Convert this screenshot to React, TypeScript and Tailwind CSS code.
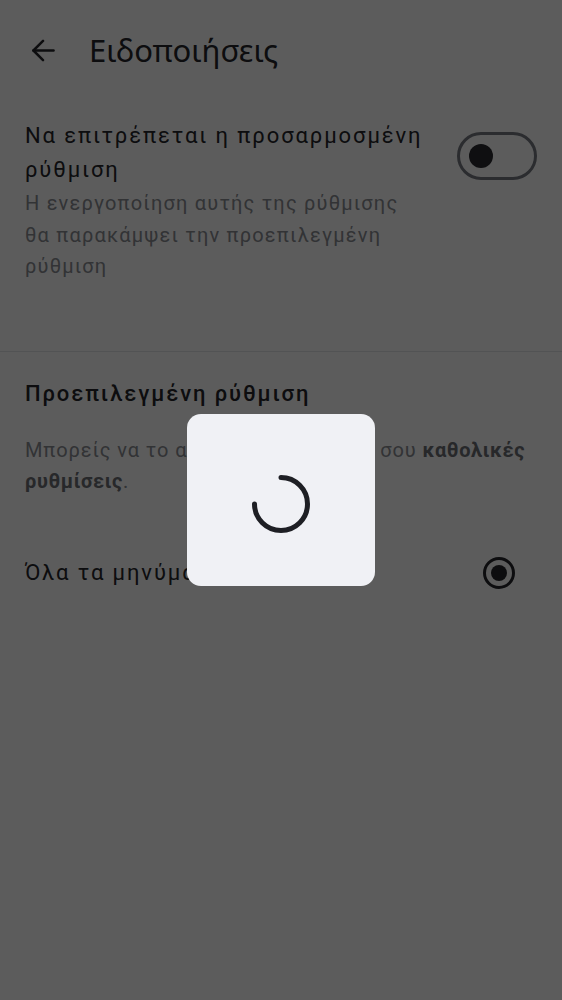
import { useState } from 'react';

function Spinner() {
  // 270° arc from 12 o'clock clockwise to 9 o'clock
  return (
    <svg width="64" height="64" viewBox="0 0 64 64" className="block">
      <path
        d="M32 5.5 A26.5 26.5 0 1 1 5.5 32"
        fill="none"
        stroke="#1e1f24"
        strokeWidth="5"
        strokeLinecap="round"
      />
    </svg>
  );
}

export default function App() {
  const [custom, setCustom] = useState(false);
  const [choice, setChoice] = useState('all');

  return (
    <div className="min-h-screen bg-white" style={{ fontFamily: 'Roboto, "Noto Sans", sans-serif' }}>
      {/* Header */}
      <div className="flex items-center h-[100px] pl-[32px] gap-[34px]">
        <button className="w-[23px] h-6 flex items-center justify-center">
          <svg width="23" height="23" viewBox="0 0 24 24" fill="none" stroke="#25262a" strokeWidth="2.6" strokeLinecap="round" strokeLinejoin="round">
            <path d="M22.5 12H1.5" />
            <path d="M11.5 2 L1.5 12 L11.5 22" />
          </svg>
        </button>
        <h1 className="text-[31px] text-[#25262a]" style={{ fontFamily: '"Noto Sans", sans-serif' }}>
          Ειδοποιήσεις
        </h1>
      </div>

      {/* Custom setting */}
      <div className="flex items-start justify-between px-[25px] pt-[19px] pb-[68px] border-b border-[#e4e5e9]">
        <div className="max-w-[402px]">
          <div className="text-[22px] leading-[34px] tracking-[1.9px] text-[#25262a]">
            Να επιτρέπεται η προσαρμοσμένη ρύθμιση
          </div>
          <div className="text-[20px] leading-[31.5px] tracking-[1.2px] text-[#8a8d93] mt-[1px]">
            Η ενεργοποίηση αυτής της ρύθμισης θα παρακάμψει την προεπιλεγμένη ρύθμιση
          </div>
        </div>
        <button
          onClick={() => setCustom(!custom)}
          className="mt-[13px] w-[80px] h-[48px] rounded-full border-[3px] border-[#777b82] flex items-center px-[9px] shrink-0"
        >
          <span className="w-[24px] h-[24px] rounded-full bg-[#2a2b30]" />
        </button>
      </div>

      {/* Default setting */}
      <div className="px-[25px] pt-[25px]">
        <h2 className="text-[22px] leading-[34px] tracking-[1.9px] font-medium text-[#25262a]">Προεπιλεγμένη ρύθμιση</h2>
        <p className="mt-[24px] text-[20px] leading-[31px] tracking-[0.9px] text-[#8a8d93]">
          Μπορείς να το αλλάξεις στις δικές σου{' '}
          <span className="font-bold tracking-[0.6px] text-[#6d7076]">καθολικές ρυθμίσεις</span>.
        </p>
        <div className="mt-[59px] flex items-center justify-between" onClick={() => setChoice('all')}>
          <span className="text-[22px] leading-[34px] tracking-[1.9px] text-[#25262a]">Όλα τα μηνύματα</span>
          <span className="w-[32px] h-[32px] mr-[22px] rounded-full border-[3px] border-[#25262a] flex items-center justify-center">
            {choice === 'all' && <span className="w-[16px] h-[16px] rounded-full bg-[#25262a]" />}
          </span>
        </div>
      </div>

      {/* Loading overlay */}
      <div className="fixed inset-0 bg-black/64 flex items-center justify-center">
        <div className="w-[188px] h-[172px] rounded-[14px] bg-[#f0f1f5] flex items-center justify-center pt-[8px]">
          <Spinner />
        </div>
      </div>
    </div>
  );
}
